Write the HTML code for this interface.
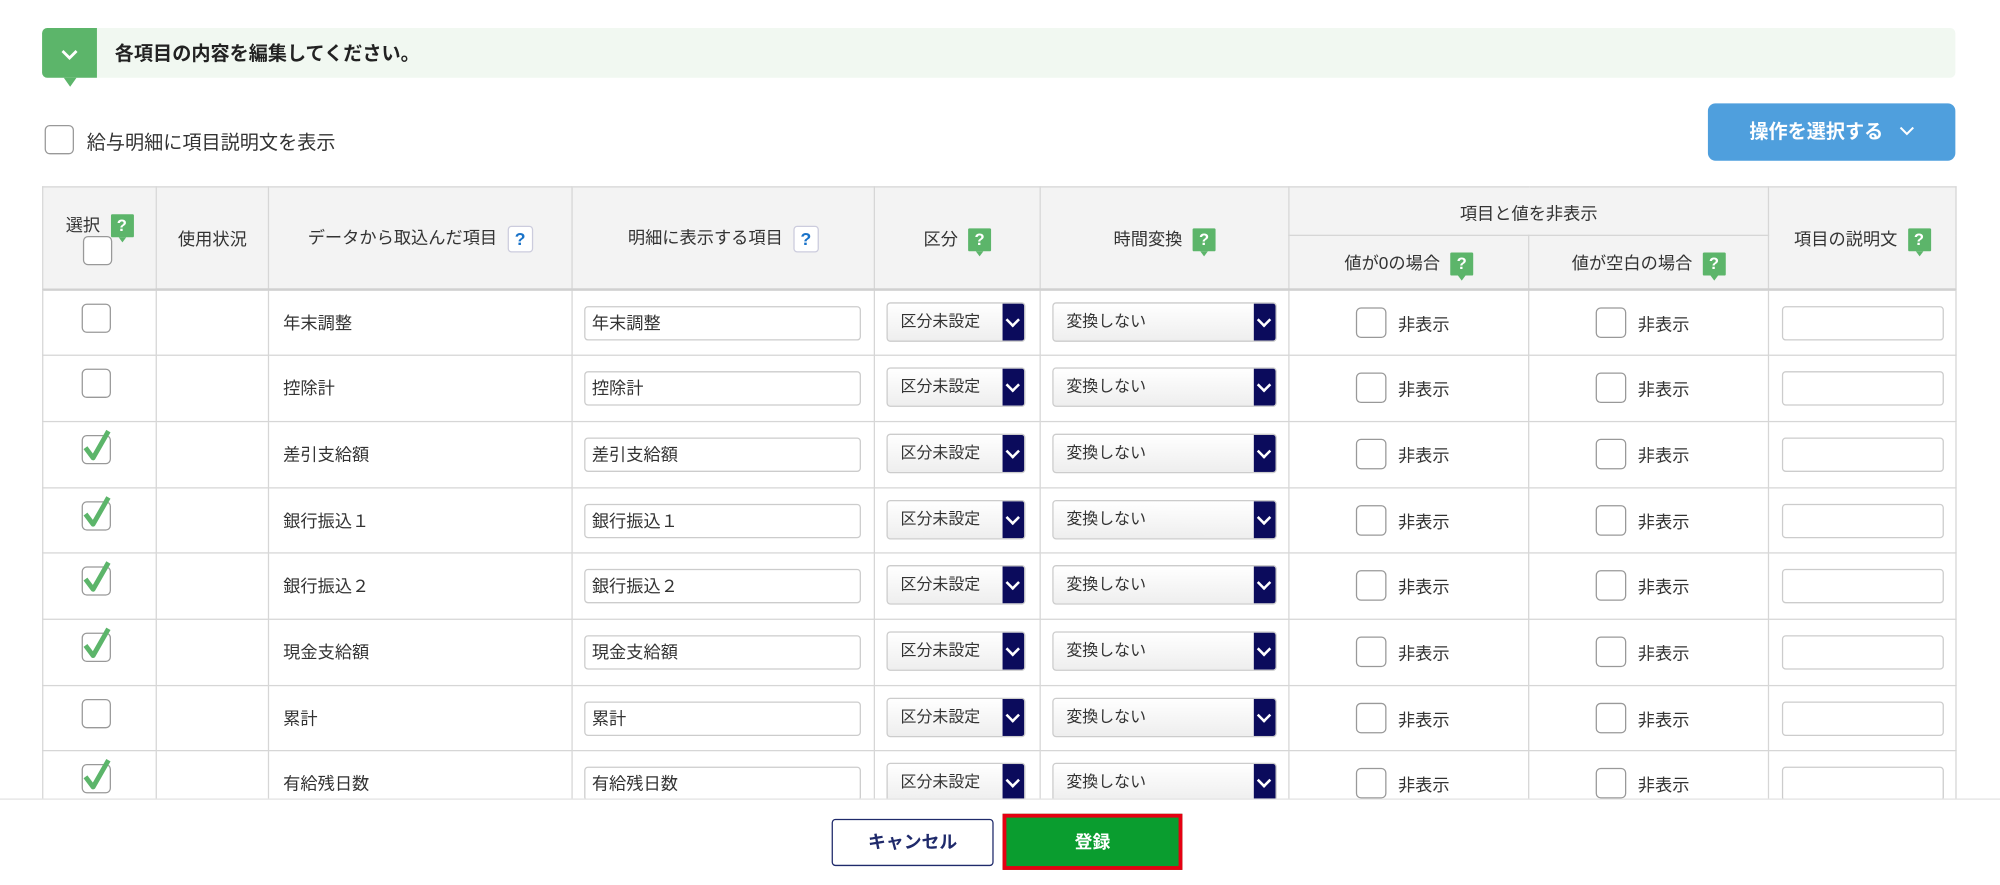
<!DOCTYPE html>
<html><head><meta charset="utf-8"><style>
html,body{margin:0;padding:0;background:#fff;overflow:hidden}
body{width:2000px;height:885px;position:relative}
#w{position:absolute;left:0;top:0;width:1568px;height:694px;transform:scale(1.27551);transform-origin:0 0;font-family:"Liberation Sans","Noto Sans CJK JP",sans-serif;color:#333}
.a{position:absolute}
.banner{left:33px;top:22px;width:1500px;height:39px;background:#f1f8f1;border-radius:4px}
.gbox{left:33px;top:22px;width:43px;height:39px;background:#5cb56a;border-radius:4px 0 0 4px}
.gbox:after{content:"";position:absolute;left:17px;top:39px;border:5px solid transparent;border-top:7px solid #5cb56a}
.bt{left:90px;top:31px;font-size:15px;font-weight:bold;color:#222}
.cb{position:absolute;width:20px;height:20px;border:1.5px solid #999;border-radius:4px;background:#fff;box-sizing:border-box}
.btn{left:1339px;top:81px;width:194px;height:45px;background:#4f9fdd;border-radius:6px;color:#fff;font-weight:bold;font-size:15px;line-height:45px;text-align:center}
table{position:absolute;left:33px;top:146px;border-collapse:collapse;table-layout:fixed}
td,th{border:1px solid #d6d6d6;padding:0;font-size:13.5px;font-weight:normal;text-align:center}
th{background:#f3f3f3;color:#333}
td{height:auto}
td>div.c{position:relative;height:50.7px;overflow:visible}
thead{border-bottom:2px solid #d0d0d0}
.q{display:inline-block;width:18px;height:18px;background:#5cb56a;color:#fff;font-weight:bold;font-size:13px;line-height:18px;text-align:center;vertical-align:middle;margin-left:8px;position:relative;border-radius:1px}
.q:after{content:"";position:absolute;left:6px;top:18px;border:3px solid transparent;border-top:4px solid #5cb56a}
.qb{display:inline-block;width:18px;height:19px;border:1px solid #ccd;background:#fff;color:#1a73c9;font-weight:bold;font-size:14px;line-height:19px;text-align:center;vertical-align:middle;margin-left:8px;border-radius:3px}
.inp{position:absolute;border:1px solid #ccc;border-radius:3px;background:#fff;box-sizing:border-box;height:27px;font-size:13.5px;line-height:25px;padding-left:5px;text-align:left}
.sel{position:absolute;border:1px solid #ccc;border-radius:3px;background:linear-gradient(#fff,#eee);box-sizing:border-box;height:31px;font-size:12.5px;line-height:29px;padding-left:10px;text-align:left;overflow:hidden}
.sel i{position:absolute;right:0;top:0;width:17px;height:29px;background:#0b0b5c}
.sel i:after{content:"";position:absolute;left:4px;top:9px;width:6px;height:6px;border-right:2px solid #fff;border-bottom:2px solid #fff;transform:rotate(45deg)}
.lab{position:absolute;font-size:13.5px}
.nm{position:absolute;left:11px;top:14px;font-size:13.5px}
.foot{left:0;top:626px;width:1568px;height:68px;background:#fff;border-top:1px solid #e2e2e2}
</style></head><body><div id="w">
<div class="a banner"></div>
<div class="a gbox"><svg width="43" height="39"><path d="M16 18l5.5 5.5L27 18" stroke="#fff" stroke-width="2.2" fill="none"/></svg></div>
<div class="a bt">各項目の内容を編集してください。</div>
<div class="cb" style="left:35px;top:98px;width:23px;height:23px"></div>
<div class="a" style="left:68px;top:101px;font-size:15px">給与明細に項目説明文を表示</div>
<div class="a btn">操作を選択する<svg width="12" height="10" style="margin-left:12px"><path d="M1 2l5 5 5-5" stroke="#fff" stroke-width="1.6" fill="none"/></svg></div>
<table>
<colgroup><col style="width:89px"><col style="width:88px"><col style="width:238px"><col style="width:237px"><col style="width:130px"><col style="width:195px"><col style="width:188px"><col style="width:188px"><col style="width:147px"></colgroup>
<thead>
<tr style="height:38px"><th rowspan="2" style="position:relative">選択<span class="q">?</span><div class="cb" style="left:31px;top:38px;width:23px;height:23px"></div><div style="height:22px"></div></th><th rowspan="2">使用状況</th><th rowspan="2">データから取込んだ項目<span class="qb">?</span></th><th rowspan="2">明細に表示する項目<span class="qb">?</span></th><th rowspan="2">区分<span class="q">?</span></th><th rowspan="2">時間変換<span class="q">?</span></th><th colspan="2">項目と値を非表示</th><th rowspan="2">項目の説明文<span class="q">?</span></th></tr>
<tr style="height:42px"><th>値が0の場合<span class="q">?</span></th><th>値が空白の場合<span class="q">?</span></th></tr>
</thead>
<tbody id="tb"></tbody>
</table>
<div class="a foot"></div>
<div class="a" style="left:652px;top:642px;width:127px;height:37px;border:1.5px solid #1f2a6b;border-radius:3px;box-sizing:border-box;text-align:center;line-height:34px;font-weight:bold;font-size:14px;color:#1f2a6b">キャンセル</div>
<div class="a" style="left:786px;top:638px;width:141px;height:44px;border:3px solid #e60012;box-sizing:border-box;background:#0a9d2f;text-align:center;line-height:38px;font-weight:bold;font-size:14px;color:#fff">登録</div>
</div>
<script>
var rows=[["年末調整",0],["控除計",0],["差引支給額",1],["銀行振込１",1],["銀行振込２",1],["現金支給額",1],["累計",0],["有給残日数",1]];
var h="";
rows.forEach(function(r){
var ck='<div class="cb" style="left:30px;top:10px;width:23px;height:23px">'+(r[1]?'<svg width="24" height="26" style="position:absolute;left:-1px;top:-6px"><path d="M3 15l6 8L21 2" stroke="#5cb56a" stroke-width="3.8" fill="none" stroke-linejoin="round"/></svg>':'')+'</div>';
h+='<tr><td><div class="c">'+ck+'</div></td><td><div class="c"></div></td><td style="text-align:left"><div class="c"><span class="nm">'+r[0]+'</span></div></td><td><div class="c"><div class="inp" style="left:9px;top:12px;width:217px">'+r[0]+'</div></div></td><td><div class="c"><div class="sel" style="left:9px;top:9px;width:109px">区分未設定<i></i></div></div></td><td><div class="c"><div class="sel" style="left:9px;top:9px;width:176px">変換しない<i></i></div></div></td><td><div class="c"><div class="cb" style="left:52px;top:13px;width:24px;height:24px"></div><span class="lab" style="left:85px;top:15px">非表示</span></div></td><td><div class="c"><div class="cb" style="left:52px;top:13px;width:24px;height:24px"></div><span class="lab" style="left:85px;top:15px">非表示</span></div></td><td><div class="c"><div class="inp" style="left:10px;top:12px;width:127px"></div></div></td></tr>';
});
document.getElementById("tb").innerHTML=h;
</script>
</body></html>
